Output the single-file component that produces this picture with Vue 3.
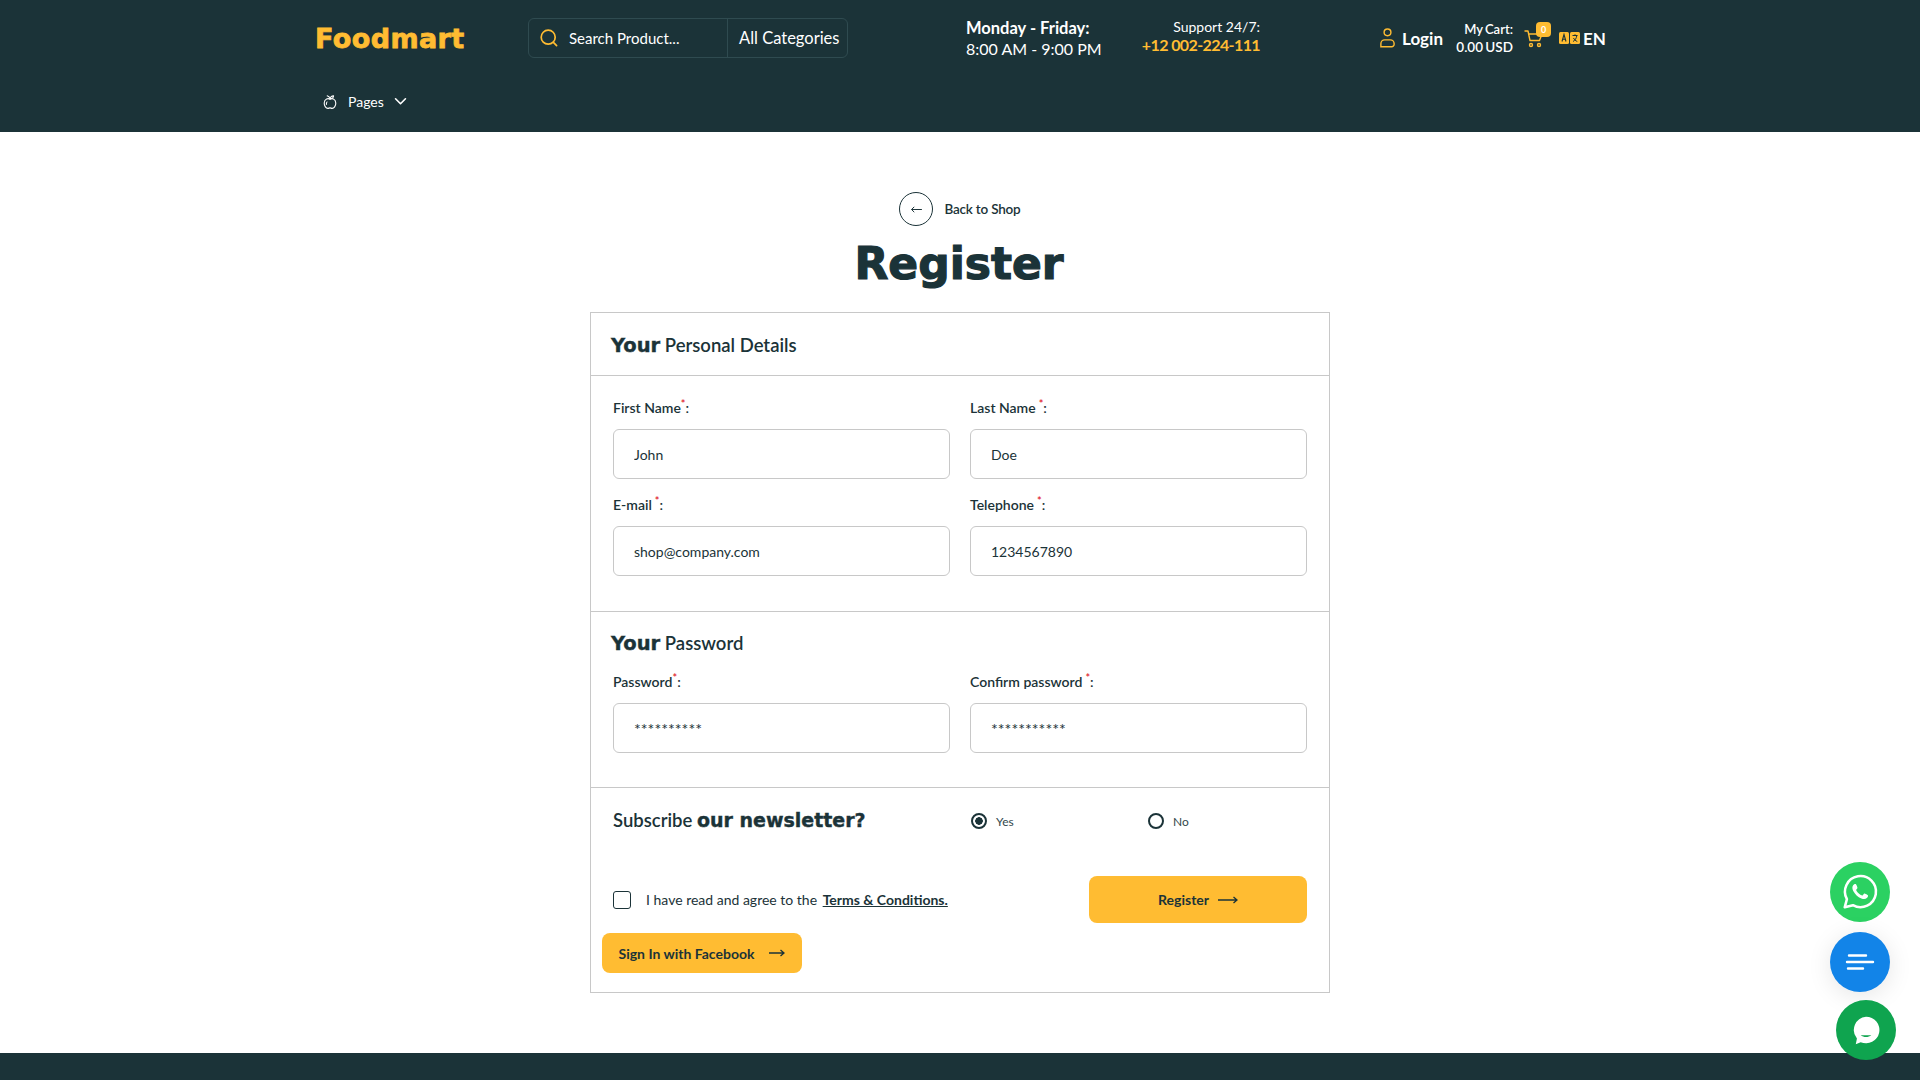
<template>
  <div class="page">
    <!-- HEADER -->
    <header class="site-header">
      <div class="header-top">
        <a class="logo">Foodmart</a>
        <div class="search-box">
          <svg class="search-icon" xmlns="http://www.w3.org/2000/svg" viewBox="0 0 20 20" width="20" height="20" fill="none"
            stroke="#ffbc32" stroke-width="1.7" stroke-linecap="round">
            <circle cx="9.2" cy="9.2" r="7" />
            <line x1="14.4" y1="14.4" x2="17.6" y2="17.6" />
          </svg>
          <span class="search-text">Search Product...</span>
          <span class="search-cat">All Categories</span>
        </div>
        <div class="hours">
          <strong>Monday - Friday:</strong>
          <span>8:00 AM - 9:00 PM</span>
        </div>
        <div class="support">
          <span>Support 24/7:</span>
          <strong>+12 002-224-111</strong>
        </div>
        <a class="login">
          <svg xmlns="http://www.w3.org/2000/svg" viewBox="0 0 18 22" width="18" height="22" fill="none" stroke="#ffbc32"
            stroke-width="1.5">
            <circle cx="9" cy="5" r="3.6" />
            <path d="M2 20.2h11.5a2.5 2.5 0 0 0 2.5-2.5v-.7a4 4 0 0 0-4-4H6a4 4 0 0 0-4 4v3.2z" />
          </svg>
          <span>Login</span>
        </a>
        <div class="cart-text">
          <span class="cart-label">My Cart:</span>
          <span>0.00 USD</span>
        </div>
        <div class="cart-icon">
          <svg xmlns="http://www.w3.org/2000/svg" viewBox="0 0 20 20" width="20" height="20" fill="none" stroke="#ffbc32"
            stroke-width="1.4" stroke-linecap="round" stroke-linejoin="round">
            <path d="M1 3h3l2 9.5h9.5L18 6H4.8" />
            <circle cx="7" cy="17" r="1.5" />
            <circle cx="15" cy="17" r="1.5" />
          </svg>
          <span class="cart-badge">0</span>
        </div>
        <div class="lang">
          <svg xmlns="http://www.w3.org/2000/svg" viewBox="0 0 21 12" width="21" height="12">
            <rect x="0" y="0" width="10" height="12" rx="1.5" fill="#ffbc32" />
            <rect x="11" y="0" width="10" height="12" rx="1.5" fill="#ffbc32" />
            <path d="M3 9.5L5 2.5l2 7M3.8 7.2h2.4" fill="none" stroke="#1b3338" stroke-width="1.1" />
            <path d="M13.5 3.5h5M16 2.3v1.2M14 9.5c2-1 3.4-3 3.8-6M14.5 6c.8 1.5 2 2.8 3.8 3.5" fill="none" stroke="#1b3338"
              stroke-width="1" />
          </svg>
          <span>EN</span>
        </div>
      </div>
      <div class="header-nav">
        <svg xmlns="http://www.w3.org/2000/svg" viewBox="0 0 16 16" width="16" height="16" fill="none" stroke="#fff"
          stroke-width="1.1" stroke-linecap="round" stroke-linejoin="round">
          <path d="M8 5.200C6.400 4.100 2.400 4.300 2.200 9c-.1 3 2 5.400 3.600 5.400.9 0 1.400-.5 2.200-.5s1.300.5 2.200.5c1.600 0 3.700-2.400 3.600-5.400C13.600 4.300 9.600 4.100 8 5.200z" />
          <path d="M8 5C7.800 3.600 6.800 2.300 5.200 1.800M8 5c.3-1.500 1.500-3 3.600-3.200-.1 1.700-1.200 3-3.600 3.200z" />
          <path d="M5 8c-.5.600-.7 1.500-.6 2.400" />
        </svg>
        <span class="nav-label">Pages</span>
        <svg xmlns="http://www.w3.org/2000/svg" viewBox="0 0 14 10" width="13" height="9" fill="none" stroke="#fff"
          stroke-width="1.800" stroke-linecap="round" stroke-linejoin="round">
          <path d="M1.500 2l5.500 5.500L12.500 2" />
        </svg>
      </div>
    </header>

    <!-- MAIN -->
    <main class="register-main">
      <a class="back-link">
        <span class="back-circle">
          <svg xmlns="http://www.w3.org/2000/svg" viewBox="0 0 14 10" width="13" height="9" fill="none" stroke="#1b3338"
            stroke-width="1.100">
            <path d="M13 5H1.500M4.500 2L1.500 5l3 3" />
          </svg>
        </span>
        <span>Back to Shop</span>
      </a>
      <h1 class="page-title">Register</h1>

      <form class="form-card" @submit.prevent>
        <div class="card-head">
          <h2 class="section-title"><b>Your</b> Personal Details</h2>
        </div>

        <div class="card-section personal">
          <div class="field-grid">
            <label v-for="f in personalFields" :key="f.label" class="field">
              <span class="field-label">{{ f.label }}<i :class="{ gap: f.gap }">*</i>:</span>
              <input type="text" :placeholder="f.value" />
            </label>
          </div>
        </div>

        <div class="card-section password">
          <h2 class="section-title pw-title"><b>Your</b> Password</h2>
          <div class="field-grid">
            <label v-for="f in passwordFields" :key="f.label" class="field masked">
              <span class="field-label">{{ f.label }}<i :class="{ gap: f.gap }">*</i>:</span>
              <input type="text" :placeholder="f.value" />
            </label>
          </div>
        </div>

        <div class="card-section newsletter">
          <div class="news-row">
            <h2 class="section-title news-title">Subscribe <b>our newsletter?</b></h2>
            <label class="radio-item yes"><input type="radio" name="news" checked /><span>Yes</span></label>
            <label class="radio-item"><input type="radio" name="news" /><span>No</span></label>
          </div>
          <div class="agree-row">
            <label class="agree">
              <input type="checkbox" />
              <span>I have read and agree to the <a>Terms &amp; Conditions.</a></span>
            </label>
            <button class="btn btn-register">Register
              <svg xmlns="http://www.w3.org/2000/svg" viewBox="0 0 20 10" width="20" height="10" fill="none" stroke="#1b3338"
                stroke-width="1.300">
                <path d="M0 5h19M15.500 2l3.500 3-3.500 3" />
              </svg>
            </button>
          </div>
          <button class="btn btn-facebook">Sign In with Facebook
            <svg xmlns="http://www.w3.org/2000/svg" viewBox="0 0 16 10" width="16" height="10" fill="none" stroke="#1b3338"
              stroke-width="1.300">
              <path d="M0 5h15M11.500 2l3.500 3-3.500 3" />
            </svg>
          </button>
        </div>
      </form>
    </main>

    <footer class="site-footer"></footer>

    <!-- FLOATING BUTTONS -->
    <a class="float-btn whatsapp">
      <svg xmlns="http://www.w3.org/2000/svg" viewBox="0 0 36 36" width="38" height="38">
        <path d="M3.500 32.500l2.100-7.700A14.700 14.700 0 1 1 11.300 30.500z" fill="none" stroke="#fff" stroke-width="2.400" stroke-linejoin="round" />
        <path d="M13.500 10.500c-.5 0-1.400.3-2 1.200-1 1.400-1 3.300.1 5.300 1.600 3 4.300 5.700 7.700 7.100 2.300.9 4.200.6 5.400-.6.800-.8 1-1.800.9-2.300-.1-.4-2.900-1.800-3.400-1.800-.6 0-1.100 1.400-1.800 1.800-.5.200-2-.4-3.800-2-1.400-1.300-2.200-2.700-2.200-3.200 0-.6 1.100-1.200 1.200-1.900.1-.5-1-3.200-1.400-3.500-.2-.1-.4-.1-.7-.1z" fill="#fff" />
      </svg>
    </a>
    <a class="float-btn menu">
      <svg xmlns="http://www.w3.org/2000/svg" viewBox="0 0 30 20" width="30" height="20" fill="none" stroke="#fff" stroke-width="2.400"
        stroke-linecap="round">
        <path d="M4 3.500h17M2 10h26M3 16.500h15" />
      </svg>
    </a>
    <a class="float-btn chat">
      <svg xmlns="http://www.w3.org/2000/svg" viewBox="0 0 36 36" width="32" height="32">
        <path d="M18 3a15 15 0 1 1-6 28.700L6.500 34l1.300-6.500A15 15 0 0 1 18 3z" fill="#fff" />
        <path d="M12 24c3.500 2.600 8.500 2.600 12 0z" fill="#0fa44f" />
      </svg>
    </a>
  </div>
</template>

<script setup>
const personalFields = [
  { label: 'First Name', value: 'John' },
  { label: 'Last Name', value: 'Doe', gap: true },
  { label: 'E-mail', value: 'shop@company.com', gap: true },
  { label: 'Telephone', value: '1234567890', gap: true }
];

const passwordFields = [
  { label: 'Password', value: '**********' },
  { label: 'Confirm password', value: '***********', gap: true }
];
</script>

<style>
html,
body {
  margin: 0;
  background: #fff;
}
</style>

<style scoped>
* {
  box-sizing: border-box;
}

.page {
  height: 1080px;
  overflow: hidden;
  display: flex;
  flex-direction: column;
  font-family: "Lato", "Liberation Sans", sans-serif;
  color: #1b3338;
  background: #fff;
}

.site-header {
  height: 132px;
  flex-shrink: 0;
  background: #1b3338;
  color: #fff;
  padding: 18px 315px 0;
}

.header-top {
  height: 40px;
  display: flex;
  align-items: center;
}

.logo {
  width: 213px;
  flex-shrink: 0;
  font-family: "DejaVu Sans", "Liberation Sans", sans-serif;
  font-weight: 700;
  font-size: 27px;
  letter-spacing: 0.4px;
  color: #ffbc32;
  -webkit-text-stroke: 0.8px #ffbc32;
}

.search-box {
  width: 320px;
  height: 40px;
  flex-shrink: 0;
  display: flex;
  align-items: center;
  border: 1px solid #2f4b50;
  border-radius: 6px;
  padding-left: 10px;
}

.search-icon {
  flex-shrink: 0;
}

.search-text {
  width: 158px;
  flex-shrink: 0;
  margin-left: 10px;
  font-size: 15px;
}

.search-cat {
  height: 38px;
  line-height: 38px;
  border-left: 1px solid #2f4b50;
  padding-left: 11px;
  font-size: 16.5px;
  white-space: nowrap;
}

.hours {
  margin-left: 118px;
  width: 181px;
  flex-shrink: 0;
  display: flex;
  flex-direction: column;
  gap: 3px;
  font-size: 16.500px;
  line-height: 18px;
}

.hours span {
  font-size: 16px;
}

.hours strong {
  font-weight: 700;
}

.support {
  width: 113px;
  flex-shrink: 0;
  display: flex;
  flex-direction: column;
  align-items: flex-end;
  margin-top: -4px;
  font-size: 14px;
  line-height: 18px;
  white-space: nowrap;
}

.support strong {
  color: #ffbc32;
  font-size: 16px;
  font-weight: 700;
  letter-spacing: -0.6px;
}

.login {
  margin-left: 119px;
  width: 64px;
  flex-shrink: 0;
  display: flex;
  align-items: center;
  gap: 6px;
  font-size: 17px;
  font-weight: 700;
}

.cart-text {
  width: 70px;
  flex-shrink: 0;
  display: flex;
  flex-direction: column;
  align-items: flex-end;
  font-size: 13.500px;
  font-weight: 600;
  line-height: 18px;
  word-spacing: -1px;
  white-space: nowrap;
}

.cart-label {
  font-size: 13px;
}

.cart-icon {
  position: relative;
  margin-left: 11px;
  width: 20px;
  height: 20px;
  flex-shrink: 0;
}

.cart-badge {
  position: absolute;
  top: -6px;
  left: 12px;
  width: 15px;
  height: 15px;
  border-radius: 4px;
  background: #ffbc32;
  color: #fff;
  font-size: 9px;
  font-weight: 700;
  line-height: 15px;
  text-align: center;
}

.lang {
  margin-left: 15px;
  display: flex;
  align-items: center;
  gap: 3px;
  font-size: 17px;
  font-weight: 700;
}

.header-nav {
  margin-top: 35px;
  margin-left: 7px;
  display: flex;
  align-items: center;
  font-size: 14px;
}

.nav-label {
  margin: 0 10px;
}

.register-main {
  flex: 1;
  display: flex;
  flex-direction: column;
  align-items: center;
  padding-top: 60px;
}

.back-link {
  display: flex;
  align-items: center;
  gap: 11px;
  font-size: 13.500px;
  font-weight: 600;
  letter-spacing: -0.2px;
}

.back-circle {
  width: 34px;
  height: 34px;
  border: 1px solid #1b3338;
  border-radius: 50%;
  display: flex;
  align-items: center;
  justify-content: center;
}

.page-title {
  margin: 10px 2px 0 0;
  font-family: "DejaVu Sans", "Liberation Sans", sans-serif;
  font-weight: 700;
  font-size: 44px;
  line-height: 56px;
  -webkit-text-stroke: 1.2px #1b3338;
}

.form-card {
  width: 740px;
  margin-top: 20px;
  border: 1px solid #c8c8c8;
  height: 681px;
  flex-shrink: 0;
}

.card-head {
  height: 63px;
  padding: 21px 20px 0;
  border-bottom: 1px solid #c8c8c8;
}

.section-title {
  margin: 0;
  font-size: 18.500px;
  font-weight: 600;
  line-height: 22px;
}

.section-title b {
  font-family: "DejaVu Sans", "Liberation Sans", sans-serif;
  font-weight: 700;
  font-size: 19.500px;
  -webkit-text-stroke: 0.4px #1b3338;
}

.news-title b {
  font-size: 19px;
}

.card-section {
  padding: 0 22px;
  border-bottom: 1px solid #c8c8c8;
}

.field-grid {
  display: grid;
  grid-template-columns: 337px 337px;
  column-gap: 20px;
  row-gap: 15px;
}

.field {
  display: block;
}

.field-label {
  display: block;
  height: 32px;
  font-size: 14px;
  font-weight: 600;
  line-height: 14px;
}

.field-label i {
  color: #e0202c;
  font-style: normal;
  font-size: 11px;
  vertical-align: 5px;
}

.field-label i.gap {
  margin-left: 3px;
}

.field input {
  display: block;
  width: 100%;
  height: 50px;
  padding: 0 20px;
  border: 1px solid #c8c8c8;
  border-radius: 6px;
  font-family: inherit;
  font-size: 14px;
  color: #1b3338;
  background: #fff;
  outline: none;
}

.field input::placeholder {
  color: #1b3338;
  opacity: 1;
}

.field.masked input {
  font-size: 16px;
}

.personal {
  height: 236px;
  padding-top: 21px;
}

.password {
  height: 176px;
  padding-top: 20px;
}

.pw-title {
  margin: 0 0 16px -2px;
}

.newsletter {
  border-bottom: none;
  padding-top: 21px;
  height: 204px;
}

.news-row {
  height: 67px;
  display: flex;
  align-items: flex-start;
}

.news-title {
  width: 358px;
  flex-shrink: 0;
}

.radio-item {
  display: flex;
  align-items: center;
  gap: 9px;
  height: 24px;
  font-size: 12px;
  color: #33484c;
}

.radio-item.yes {
  width: 177px;
  flex-shrink: 0;
}

.radio-item input {
  appearance: none;
  width: 16px;
  height: 16px;
  margin: 0;
  border: 2px solid #1b3338;
  border-radius: 50%;
  background: #fff;
}

.radio-item input:checked {
  background: radial-gradient(circle, #1b3338 0 3.500px, #fff 4px);
}

.agree-row {
  height: 47px;
  display: flex;
  align-items: center;
  justify-content: space-between;
}

.agree {
  display: flex;
  align-items: center;
  gap: 15px;
  font-size: 14px;
}

.agree input {
  appearance: none;
  width: 18px;
  height: 18px;
  margin: 0;
  border: 1.500px solid #1b3338;
  border-radius: 3px;
  background: #fff;
}

.agree a {
  margin-left: 2px;
  font-weight: 700;
  text-decoration: underline;
}

.btn {
  border: none;
  background: #ffbc32;
  color: #1b3338;
  font-family: inherit;
  font-weight: 700;
  font-size: 14px;
  border-radius: 8px;
  display: flex;
  align-items: center;
  justify-content: center;
}

.btn-register {
  width: 218px;
  height: 47px;
  gap: 9px;
}

.btn-facebook {
  width: 200px;
  height: 40px;
  margin: 10px 0 0 -11px;
  gap: 15px;
}

.site-footer {
  height: 27px;
  flex-shrink: 0;
  background: #1b3338;
}

.float-btn {
  position: fixed;
  width: 60px;
  height: 60px;
  border-radius: 50%;
  display: flex;
  align-items: center;
  justify-content: center;
}

.whatsapp {
  left: 1830px;
  top: 862px;
  background: #2bd162;
}

.menu {
  left: 1830px;
  top: 932px;
  background: #1284e8;
  box-shadow: 0 4px 24px rgba(0, 0, 0, 0.1);
}

.chat {
  left: 1836px;
  top: 1000px;
  background: #0fa44f;
}
</style>
